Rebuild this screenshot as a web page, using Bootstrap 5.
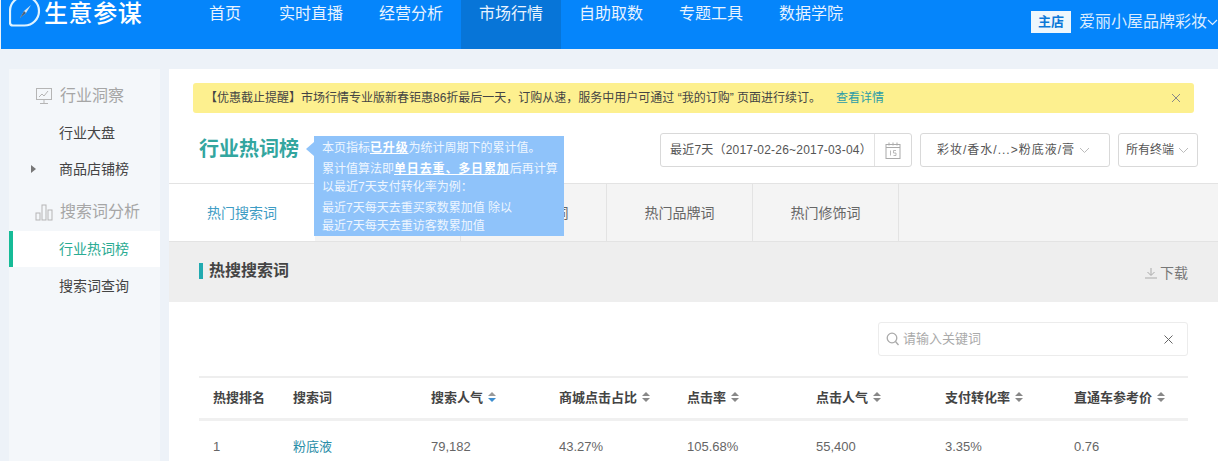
<!DOCTYPE html>
<html lang="zh-CN">
<head>
<meta charset="utf-8">
<title>生意参谋</title>
<link rel="stylesheet" href="https://cdn.jsdelivr.net/npm/bootstrap@5.3.0/dist/css/bootstrap.min.css">
<style>
html,body{height:461px;overflow:hidden}
body{background:#edf2f8;font-family:"Liberation Sans","Noto Sans CJK SC",sans-serif;color:#444;font-size:13px}
.top-bar{height:49px;background:#0585fb;color:#fff;margin-left:1px;overflow:hidden;white-space:nowrap}
.brand-box{width:190px;height:27px;padding-left:8px;gap:1px}
.brand-name{font-size:24px;line-height:27px;font-weight:500;letter-spacing:.6px;color:#fff}
.top-link{display:block;height:49px;padding:0 18px;font-size:16px;line-height:27px;color:#e8f3ff;text-decoration:none}
.top-link:first-child{margin-right:2px}
.top-link.on{background:#0775d8}
.shop-box{height:49px;padding-top:11px;gap:8px}
.shop-tag{width:40px;height:22px;line-height:22px;text-align:center;background:#eef7fd;color:#0b78d8;font-weight:700;font-size:13px}
.shop-name{font-size:16px;line-height:22px;color:#dbecff}
.page-wrap{padding:20px 0 0 9px;gap:9px;height:412px}
.side-col{width:151px;background:#f4f7fa;flex:none;height:392px}
.side-head{height:36px;padding-left:26px;gap:7px;font-size:16px;color:#a6a6a6}
.side-head.first{margin-top:9px}
.side-head.second{margin-top:7px}
.side-link{display:block;position:relative;height:36px;line-height:36px;padding-left:50px;font-size:14px;color:#444;text-decoration:none;white-space:nowrap}
.side-head.first+.side-link{margin-top:1px}
.side-link.on{background:#fff;color:#2bab93;border-left:4px solid #16bb97;padding-left:46px;margin-top:1px;margin-bottom:1px}
.side-tri{position:absolute;left:22px;top:14px;border-left:5px solid #777;border-top:4px solid transparent;border-bottom:4px solid transparent}
.main-col{background:#fff;flex:1;min-width:0;height:392px}
.notice{height:30px;margin:14px 24px 0;padding:0 13px 0 12px;background:#fdf08f;border-radius:3px;font-size:12px;color:#444}
.notice-link{color:#2c9ca8;text-decoration:none;margin-left:15px}
.title-row{height:70px;padding:4px 20px 0 30px;position:relative}
.page-title{font-size:20px;font-weight:700;color:#33a69f;margin:0;line-height:32px;position:relative;top:-1px}
.tip-box{position:absolute;left:145px;top:23px;width:250px;height:100px;background:#8fc3fa;color:#eef6ff;font-size:12px;line-height:18px;padding:3px 0 3px 8px;z-index:5;white-space:nowrap}
.tip-box::before{content:"";position:absolute;left:-8px;top:6px;border-right:8px solid #8fc3fa;border-top:7px solid transparent;border-bottom:7px solid transparent}
.tip-box p{margin:0 0 3px}
.tip-box b{text-decoration:underline;color:#fff;letter-spacing:.85px}
.sel-box{height:34px;border:1px solid #d9d9d9;border-radius:3px;font-size:12px;color:#555;background:#fff;white-space:nowrap}
.sel-date{width:252px;margin-right:8px;padding-left:9px;letter-spacing:.2px}
.sel-cat{width:190px;margin-right:8px;padding-left:16px;gap:4px;letter-spacing:1px}
.sel-end{width:80px;padding-left:7px;gap:4px}
.cal-cell{width:37px;height:100%;border-left:1px solid #e2e2e2;margin-left:auto}
.tab-row{height:59px;background:#f4f4f4;border-top:1px solid #e3e3e3;border-bottom:1px solid #e3e3e3}
.tab-item{width:146px;border-right:1px solid #e3e3e3;font-size:14px;color:#666;text-decoration:none;padding-top:1px}
.tab-item.on{background:#fff;color:#3e9cc4;border-right:0}
.sec-head{height:60px;background:#eee;padding:0 30px}
.sec-name{font-size:16px;font-weight:700;color:#444;border-left:4px solid #21aab0;padding-left:6px;line-height:16px;margin-bottom:2px}
.down-link{font-size:14px;color:#777;text-decoration:none;gap:3px;margin-top:2px}
.find-row{padding:20px 30px 0}
.find-box{width:310px;height:34px;border:1px solid #ececec;border-radius:3px;padding:0 14px 0 7px;gap:4px;color:#aaa;font-size:13px}
.data-wrap{margin:20px 30px 0}
.data-grid{table-layout:fixed;width:100%;margin:0;border-top:2px solid #eee}
.data-grid>thead>tr>th{height:42px;padding:0 0 0 14px;border-bottom:3px solid #f0f0f0;font-size:13px;color:#444;white-space:nowrap;vertical-align:middle;background:transparent}
.data-grid>tbody>tr>td{height:54px;padding:0 0 0 14px;border:0;font-size:13px;color:#666;vertical-align:middle;background:transparent}
.data-grid th:nth-child(1){width:80px}
.data-grid th:nth-child(2){width:138px}
.data-grid th:nth-child(3),.data-grid th:nth-child(4){width:128px}
.data-grid th:nth-child(5),.data-grid th:nth-child(6),.data-grid th:nth-child(7){width:129px}
.word-link{color:#2b8ea8;text-decoration:none}
.sort-ico{margin-left:4px;vertical-align:-1px}
</style>
</head>
<body>
<header class="top-bar d-flex">
  <div class="brand-box d-flex align-items-center">
    <svg width="34" height="27" viewBox="0 0 34 27" fill="none" aria-hidden="true"><path d="M15.500 -3.500a14.500 14.500 0 0 1 0 29H4a3 3 0 0 1-3-3V11A14.500 14.500 0 0 1 15.500 -3.500Z" stroke="#dff3ff" stroke-width="2.200"/><path d="M22 5 17 13l-6 5 4-7Z" fill="#d7e5f0"/><path d="M11 18l6-5-2-2Z" fill="#48617c"/></svg>
    <span class="brand-name">生意参谋</span>
  </div>
  <nav class="d-flex">
    <a class="top-link" href="#">首页</a>
    <a class="top-link" href="#">实时直播</a>
    <a class="top-link" href="#">经营分析</a>
    <a class="top-link on" href="#">市场行情</a>
    <a class="top-link" href="#">自助取数</a>
    <a class="top-link" href="#">专题工具</a>
    <a class="top-link" href="#">数据学院</a>
  </nav>
  <div class="shop-box d-flex ms-auto align-items-start">
    <span class="shop-tag">主店</span>
    <span class="shop-name">爱丽小屋品牌彩妆<svg width="11" height="7" viewBox="0 0 11 7" fill="none"><path d="M1 1l4.500 4.500L10 1" stroke="#dbecff" stroke-width="1.200"/></svg></span>
  </div>
</header>

<div class="page-wrap d-flex">
  <aside class="side-col">
    <div class="side-head first d-flex align-items-center">
      <svg width="18" height="18" viewBox="0 0 18 18" fill="none" stroke="#b5b5b5"><rect x="1.500" y="1.500" width="15" height="11"/><path d="M4 10l3-3 2 2 4-5M9 13v3M5 16.500h8"/></svg>
      <span>行业洞察</span>
    </div>
    <a class="side-link" href="#">行业大盘</a>
    <a class="side-link" href="#"><i class="side-tri"></i>商品店铺榜</a>
    <div class="side-head second d-flex align-items-center">
      <svg width="18" height="18" viewBox="0 0 18 18" fill="none" stroke="#b5b5b5"><rect x="1" y="10" width="4" height="7"/><rect x="7" y="2" width="4" height="15"/><rect x="13" y="7" width="4" height="10"/></svg>
      <span>搜索词分析</span>
    </div>
    <a class="side-link on" href="#">行业热词榜</a>
    <a class="side-link" href="#">搜索词查询</a>
  </aside>

  <main class="main-col">
    <div class="notice d-flex align-items-center">
      <span>【优惠截止提醒】市场行情专业版新春钜惠86折最后一天，订购从速，服务中用户可通过 “我的订购” 页面进行续订。</span>
      <a class="notice-link" href="#">查看详情</a>
      <svg class="ms-auto" width="10" height="10" viewBox="0 0 10 10" stroke="#888" fill="none"><path d="M1 1l8 8M9 1l-8 8"/></svg>
    </div>

    <div class="title-row d-flex align-items-center">
      <h1 class="page-title">行业热词榜</h1>
      <div class="tip-box">
        <p>本页指标<b>已升级</b>为统计周期下的累计值。</p>
        <p>累计值算法即<b>单日去重、多日累加</b>后再计算<br>以最近7天支付转化率为例：</p>
        <p>最近7天每天去重买家数累加值 除以<br>最近7天每天去重访客数累加值</p>
      </div>
      <div class="sel-box sel-date d-flex align-items-center ms-auto">
        <span>最近7天（2017-02-26~2017-03-04）</span>
        <span class="cal-cell d-flex align-items-center justify-content-center">
          <svg width="16" height="17" viewBox="0 0 16 17" fill="none" stroke="#aaa"><rect x="1" y="2.500" width="14" height="14"/><path d="M1 5.500h14M4 .5v3M8 .5v3M12 .5v3"/><path d="M5.500 8.500v5M8.500 13.500h2.500v-2.500h-2.500v-2.500h2.500" stroke-width=".8"/></svg>
        </span>
      </div>
      <div class="sel-box sel-cat d-flex align-items-center">
        <span>彩妆/香水/...&gt;粉底液/膏</span>
        <svg width="11" height="7" viewBox="0 0 11 7" fill="none" stroke="#bbb"><path d="M1 1l4.500 4.500L10 1"/></svg>
      </div>
      <div class="sel-box sel-end d-flex align-items-center">
        <span>所有终端</span>
        <svg width="11" height="7" viewBox="0 0 11 7" fill="none" stroke="#bbb"><path d="M1 1l4.500 4.500L10 1"/></svg>
      </div>
    </div>

    <div class="tab-row d-flex">
      <a class="tab-item on d-flex align-items-center justify-content-center" href="#">热门搜索词</a>
      <a class="tab-item d-flex align-items-center justify-content-center" href="#">热门核心词</a>
      <a class="tab-item d-flex align-items-center justify-content-center" href="#">热门长尾词</a>
      <a class="tab-item d-flex align-items-center justify-content-center" href="#">热门品牌词</a>
      <a class="tab-item d-flex align-items-center justify-content-center" href="#">热门修饰词</a>
    </div>

    <div class="sec-head d-flex align-items-center justify-content-between">
      <span class="sec-name">热搜搜索词</span>
      <a class="down-link d-flex align-items-center" href="#">
        <svg width="12" height="12" viewBox="0 0 12 12" fill="none" stroke="#aaa"><path d="M6 1v7M2.500 5l3.500 3.500L9.500 5M0 11h12"/></svg>
        下载
      </a>
    </div>

    <div class="find-row d-flex justify-content-end">
      <div class="find-box d-flex align-items-center">
        <svg width="13" height="14" viewBox="0 0 13 14" fill="none" stroke="#aaa" stroke-width="1.300"><circle cx="6" cy="6" r="4.800"/><path d="M9.500 9.500l3 3.500"/></svg>
        <span>请输入关键词</span>
        <svg class="ms-auto" width="9" height="9" viewBox="0 0 9 9" stroke="#666" fill="none"><path d="M.5.5l8 8M8.500.5l-8 8"/></svg>
      </div>
    </div>

    <div class="data-wrap">
      <table class="table data-grid">
        <thead>
          <tr>
            <th>热搜排名</th>
            <th>搜索词</th>
            <th>搜索人气<svg class="sort-ico" width="10" height="12" viewBox="0 0 10 12"><path d="M5 1l4 4H1Z" fill="#999"/><path d="M5 11l4-4H1Z" fill="#3d8ed0"/></svg></th>
            <th>商城点击占比<svg class="sort-ico" width="10" height="12" viewBox="0 0 10 12"><path d="M5 1l4 4H1ZM5 11l4-4H1Z" fill="#888"/></svg></th>
            <th>点击率<svg class="sort-ico" width="10" height="12" viewBox="0 0 10 12"><path d="M5 1l4 4H1ZM5 11l4-4H1Z" fill="#888"/></svg></th>
            <th>点击人气<svg class="sort-ico" width="10" height="12" viewBox="0 0 10 12"><path d="M5 1l4 4H1ZM5 11l4-4H1Z" fill="#888"/></svg></th>
            <th>支付转化率<svg class="sort-ico" width="10" height="12" viewBox="0 0 10 12"><path d="M5 1l4 4H1ZM5 11l4-4H1Z" fill="#888"/></svg></th>
            <th>直通车参考价<svg class="sort-ico" width="10" height="12" viewBox="0 0 10 12"><path d="M5 1l4 4H1ZM5 11l4-4H1Z" fill="#888"/></svg></th>
          </tr>
        </thead>
        <tbody>
          <tr>
            <td>1</td>
            <td><a class="word-link" href="#">粉底液</a></td>
            <td>79,182</td>
            <td>43.27%</td>
            <td>105.68%</td>
            <td>55,400</td>
            <td>3.35%</td>
            <td>0.76</td>
          </tr>
        </tbody>
      </table>
    </div>
  </main>
</div>
<script src="https://cdn.jsdelivr.net/npm/bootstrap@5.3.0/dist/js/bootstrap.bundle.min.js"></script>
</body>
</html>
